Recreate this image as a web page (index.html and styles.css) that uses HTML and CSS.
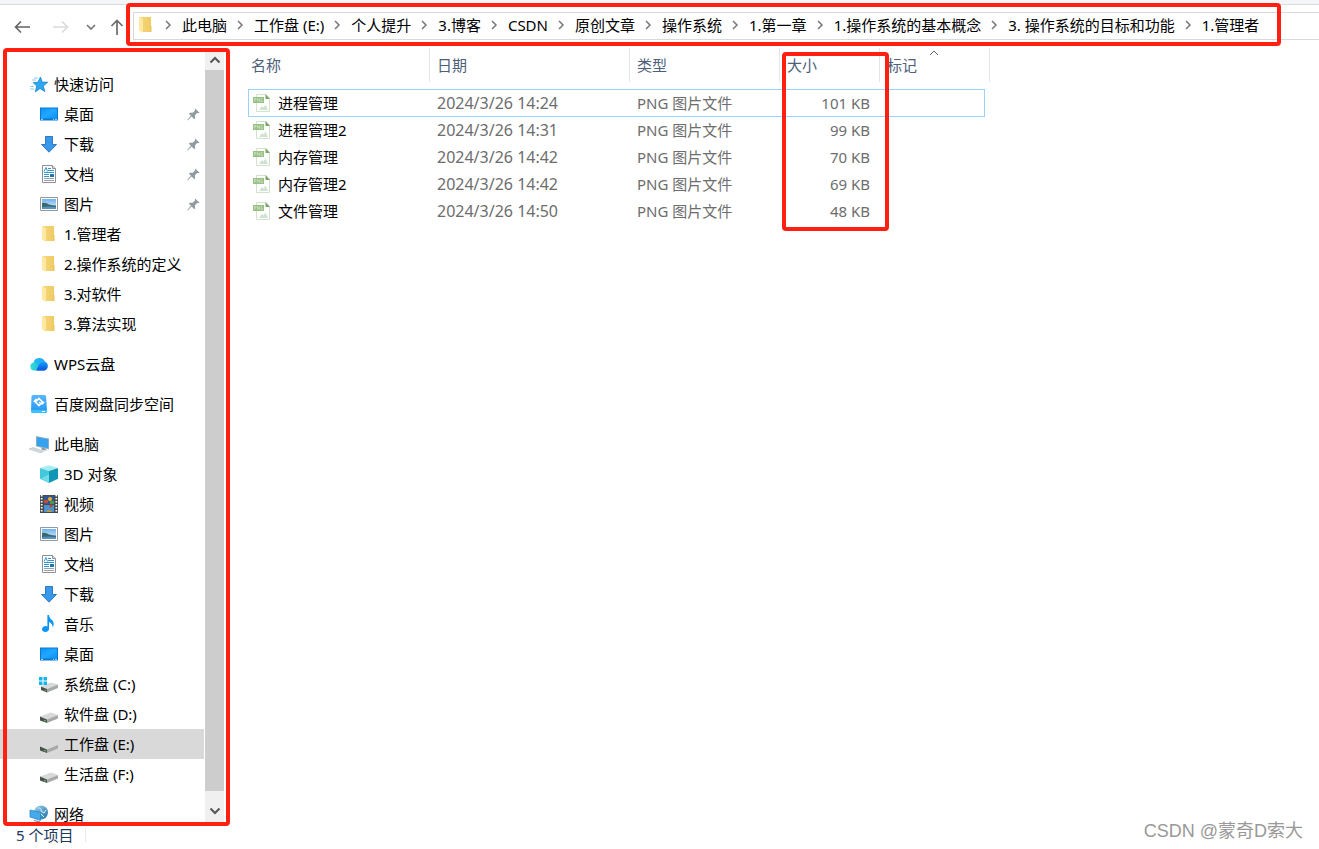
FILE: index.html
```html
<!DOCTYPE html>
<html lang="zh-CN">
<head>
<meta charset="utf-8">
<title>1.管理者</title>
<link rel="stylesheet" href="styles.css">
</head>
<body>
<svg class="sprite" aria-hidden="true">
  <defs>
    <linearGradient id="g-blue" x1="0" y1="0" x2="1" y2="1"><stop offset="0" stop-color="#0a95f5"/><stop offset=".5" stop-color="#22a7ff"/><stop offset="1" stop-color="#0a90f0"/></linearGradient>
    <linearGradient id="g-cloud" x1="0" y1="0" x2="1" y2="0"><stop offset="0" stop-color="#35e0d2"/><stop offset="1" stop-color="#17a4e8"/></linearGradient>
    <linearGradient id="g-cloud2" x1="0" y1="0" x2="0" y2="1"><stop offset="0" stop-color="#1aa4fb"/><stop offset="1" stop-color="#0a4fe0"/></linearGradient>
    <linearGradient id="g-folder" x1="0" y1="0" x2="1" y2="0"><stop offset="0" stop-color="#f5d77e"/><stop offset="1" stop-color="#f0cb63"/></linearGradient>
    <linearGradient id="g-sky" x1="0" y1="0" x2="0" y2="1"><stop offset="0" stop-color="#6fb2ee"/><stop offset="1" stop-color="#e4f3fc"/></linearGradient>
    <linearGradient id="g-sync" x1="0" y1="0" x2="0" y2="1"><stop offset="0" stop-color="#5ab6fb"/><stop offset="1" stop-color="#2196f8"/></linearGradient>
    <linearGradient id="g-globe" x1="0" y1="0" x2="1" y2="1"><stop offset="0" stop-color="#9fd4ee"/><stop offset="1" stop-color="#1e6ea8"/></linearGradient>
  </defs>
  <symbol id="i-star" viewBox="0 0 18 18"><path d="M10.500 2 12 7l5.700.3-4.500 3.600 1.700 5.600-4.900-3-4.600 3.300 1.300-5.700-3.400-3.500 4.600-.3z" fill="#2ba8f3" stroke="#1182cc" stroke-width=".8"/><path d="M4 3h4M2 5h4M.500 11.500h3M0 14h4" stroke="#54b6ee" stroke-width=".7"/></symbol>
  <symbol id="i-desktop" viewBox="0 0 18 18"><path d="M0 2.500h18v13H0z" fill="#0879cf"/><path d="M1 3.500h16v10H1z" fill="url(#g-blue)"/><path d="M1 14.300h2m10 0h1m1 0h2" stroke="#d5efff" stroke-width=".9"/></symbol>
  <symbol id="i-down" viewBox="0 0 18 18"><path d="M5.500 1.500h7v8h4L9 17.200 1.500 9.500h4z" fill="#3a98ea" stroke="#2372bd" stroke-width=".9"/></symbol>
  <symbol id="i-doc" viewBox="0 0 18 18"><path d="M2.500.5h10l3 3v14h-13z" fill="#fff" stroke="#8b9299"/><path d="M12.500.5v3h3" fill="#ddd" stroke="#8b9299"/><path d="m4 6.500 2-4 1.500 4M8 3.500h3M8 5.500h6M4 7.500h10M4 9.500h5M4 11.500h5" stroke="#3494cf" fill="none"/><path d="M10 9h4v3h-4z" fill="#2277ab"/><path d="M4 13.500h10M4 15.500h10" stroke="#999fa5"/></symbol>
  <symbol id="i-picture" viewBox="0 0 18 18"><path d="M.5 2.500h17v13H.5z" fill="#fff" stroke="#929a9f"/><path d="M2 4h14v10H2z" fill="url(#g-sky)"/><path d="M2 8q4-1 7 1.500 4 1 7 1v2H2z" fill="#386b6a"/><path d="M2 12q7-1 14 0v2H2z" fill="#5a91c3"/></symbol>
  <symbol id="i-folder" viewBox="0 0 18 18"><path d="M3 1h11v15H6z" fill="url(#g-folder)"/><path d="M13 10h1.500v6H13z" fill="#edc45b"/><path d="m2 1 4 2v14l-4-2.500z" fill="#ffe8a0"/></symbol>
  <symbol id="i-cloud" viewBox="0 0 18 18"><path d="M4 15.500a4 4 0 0 1-.5-7.900A6 6 0 0 1 15 7v8.500z" fill="url(#g-cloud)"/><path d="M4.500 5.500a5.500 5.500 0 0 1 9.300 1c-3 .3-4.500 2.500-5.300 4-1-2.500-2.300-3-4-3z" fill="#20b4f6"/><path d="M6 15.500c2-1 2-9 8-8.900a4.500 4.500 0 0 1 0 8.900z" fill="url(#g-cloud2)"/></symbol>
  <symbol id="i-sync" viewBox="0 0 18 18"><path d="M3 0h11.500q1.500 0 1.600 1.500L17 15v1q0 2-2 2H3q-2 0-2-2L1.500 1.500Q1.500 0 3 0z" fill="url(#g-sync)"/><path d="M1 15h16v1q0 2-2 2H3q-2 0-2-2z" fill="#38c3ff"/><path d="M9 3.500 12.500 7 9 10.500 5.500 7zM3.700 6.800 6.500 4M11.500 9.500 14.200 7M9 7l2 2" fill="none" stroke="#fff" stroke-width="1.600"/><path d="M12 16.500h3" stroke="#fff"/></symbol>
  <symbol id="i-pc" viewBox="0 0 18 18"><path d="m6 1 13 2.500v11L6 11.500z" fill="#a5b3be"/><path d="m6.700 2 11.600 2.300v9L6.700 10.700z" fill="#35a2ed"/><path d="M11 12.700h3.500l2.500 3-5-1z" fill="#8b9dac"/><path d="m-1 14 4-1.500 11 3.500-3 2z" fill="#d3d9dd" stroke="#aeb8bf" stroke-width=".5"/></symbol>
  <symbol id="i-cube" viewBox="0 0 18 18"><path d="m0 3 9-2.800L18 3 9 6z" fill="#a6edf3"/><path d="m0 3 9 3v12l-9-4.200z" fill="#43c8db"/><path d="m9 6 9-3v10.800L9 18z" fill="#1097b3"/><path d="m1 13.600 8-4.200V18z" fill="#70dce8"/></symbol>
  <symbol id="i-video" viewBox="0 0 18 18"><path d="M0 0h18v18H0z" fill="#444b4e"/><path d="M1.700 0v18M16.300 0v18" stroke="#fff" stroke-width="1.700" stroke-dasharray="1.500 1.500"/><path d="M4 1h10v8H4z" fill="#315793"/><path d="M4 10h10v7H4z" fill="#4b91d4"/><circle cx="10" cy="4" r="2" fill="#edaf27"/><path d="M4 5h4v3H4z" fill="#c64c35"/><path d="M10 6h4v3h-4z" fill="#49994a"/><circle cx="11" cy="11" r="1.500" fill="#c84231"/><path d="M6 17q3-4 6 0z" fill="#d49a26"/></symbol>
  <symbol id="i-music" viewBox="0 0 18 18"><path d="M9 0q0 3 3.500 5.500 2.500 3.500 0 7 .5-4-3.500-5.500v7a3.500 3 0 1 1-1.600-2.500V0z" fill="#0796f5"/></symbol>
  <symbol id="i-drive" viewBox="0 0 18 18"><path d="m0 11.500 11-4 7 2.500-11 4.500z" fill="#d7d9da"/><path d="m0 11.500 7 3V18l-7-2.500z" fill="#4b504f"/><path d="m7 14.500 11-4.500v3.500L7 18z" fill="#a6a9aa"/><path d="m4 15.300 2 .7" stroke="#58c45e" stroke-width="1.300"/></symbol>
  <symbol id="i-sysdrive" viewBox="0 0 18 18"><path d="m1 11 10-3.500 7 2-11 4.500z" fill="#d7d9da"/><path d="m1 11.500 6 2.500v3.500L1 15z" fill="#4b504f"/><path d="m7 14 11-4.500V13L7 17.500z" fill="#a6a9aa"/><path d="m4.500 15 1.500.5" stroke="#58c45e" stroke-width="1.300"/><path d="M-1 2h3.500v3.500H-1zM3.500 2H7v3.500H3.500zM-1 6.500h3.500V10H-1zM3.500 6.500H7V10H3.500z" fill="#12b4ed"/></symbol>
  <symbol id="i-network" viewBox="0 0 18 18"><circle cx="11" cy="7.500" r="7" fill="url(#g-globe)"/><path d="M8 3q4 0 3 3l3 2 2-3M9 7l5 5" stroke="#d6f0f6" fill="none"/><path d="m0 5 10.500 2.300V15.500L0 12z" fill="#46a9ea" stroke="#2683c6" stroke-width=".7"/><path d="m4 15.500 6 1.500" stroke="#69869a"/></symbol>
  <symbol id="i-pin" viewBox="0 0 14 14"><path d="m8.800.5 4.700 4.500-1.500.7-1.200-.3L8.500 8l.3 3-1 1L5 9.200.7 13.500.2 13 4.200 8.400 2 5.800l1-.8 3 .2 2.400-2.300z" fill="#919ba2"/></symbol>
  <symbol id="i-png" viewBox="0 0 18 18"><path d="M3.500.5h9.500l3.500 4v13h-13z" fill="#fff" stroke="#d2e2cc"/><path d="M12.500 0 17 5h-4.500z" fill="#77a767"/><path d="M0 3h11v6H0z" fill="#98c083"/><path d="M1.500 7.500v-3h1.500v1.500H1.500M4.500 7.500v-3l2 3v-3M9.500 4.500H8v3h1.500V6" fill="none" stroke="#d9ead1" stroke-width=".6"/><path d="m6 16 3-4 1.500 1.500 2-3L15 16z" fill="#cfe3d0"/></symbol>
  <symbol id="i-chev" viewBox="0 0 8 10"><path d="m2 1 4 4-4 4" fill="none" stroke="#777" stroke-width="1.500"/></symbol>
</svg>

<div class="window">
  <div class="ribbon-edge"></div>
  <header class="toolbar">
    <div class="history">
      <button class="tool" aria-label="后退"><svg width="16" height="14" viewBox="0 0 16 14"><path d="M16 7H1.500M7 1.500 1.500 7 7 12.500" fill="none" stroke="#636363" stroke-width="1.600"/></svg></button>
      <button class="tool" aria-label="前进" disabled><svg width="16" height="14" viewBox="0 0 16 14"><path d="M0 7h14.500M9 1.500 14.500 7 9 12.500" fill="none" stroke="#dadada" stroke-width="1.600"/></svg></button>
      <button class="tool recent" aria-label="最近的位置"><svg width="10" height="8" viewBox="0 0 10 8"><path d="m1 2 4 4 4-4" fill="none" stroke="#777" stroke-width="1.700"/></svg></button>
      <button class="tool up" aria-label="向上"><svg width="14" height="16" viewBox="0 0 14 16"><path d="M7 16V1.500M1.500 7 7 1.500 12.500 7" fill="none" stroke="#6b6b6b" stroke-width="1.700"/></svg></button>
    </div>
    <nav class="address" aria-label="地址">
      <svg class="icon"><use href="#i-folder"/></svg>
      <ol class="crumbs">
        <li><svg class="chev"><use href="#i-chev"/></svg><a href="#">此电脑</a></li>
        <li><svg class="chev"><use href="#i-chev"/></svg><a href="#">工作盘 (E:)</a></li>
        <li><svg class="chev"><use href="#i-chev"/></svg><a href="#">个人提升</a></li>
        <li><svg class="chev"><use href="#i-chev"/></svg><a href="#">3.博客</a></li>
        <li><svg class="chev"><use href="#i-chev"/></svg><a href="#">CSDN</a></li>
        <li><svg class="chev"><use href="#i-chev"/></svg><a href="#">原创文章</a></li>
        <li><svg class="chev"><use href="#i-chev"/></svg><a href="#">操作系统</a></li>
        <li><svg class="chev"><use href="#i-chev"/></svg><a href="#">1.第一章</a></li>
        <li><svg class="chev"><use href="#i-chev"/></svg><a href="#">1.操作系统的基本概念</a></li>
        <li><svg class="chev"><use href="#i-chev"/></svg><a href="#">3. 操作系统的目标和功能</a></li>
        <li><svg class="chev"><use href="#i-chev"/></svg><a href="#">1.管理者</a></li>
      </ol>
    </nav>
    <div class="mark mark-address"></div>
  </header>

  <div class="body">
    <aside class="sidebar">
      <nav class="tree" aria-label="导航窗格">
        <ul class="group">
          <li><a class="node root" href="#"><svg class="icon"><use href="#i-star"/></svg>快速访问</a></li>
          <li><a class="node" href="#"><svg class="icon"><use href="#i-desktop"/></svg>桌面<svg class="pin"><use href="#i-pin"/></svg></a></li>
          <li><a class="node" href="#"><svg class="icon"><use href="#i-down"/></svg>下载<svg class="pin"><use href="#i-pin"/></svg></a></li>
          <li><a class="node" href="#"><svg class="icon"><use href="#i-doc"/></svg>文档<svg class="pin"><use href="#i-pin"/></svg></a></li>
          <li><a class="node" href="#"><svg class="icon"><use href="#i-picture"/></svg>图片<svg class="pin"><use href="#i-pin"/></svg></a></li>
          <li><a class="node" href="#"><svg class="icon"><use href="#i-folder"/></svg>1.管理者</a></li>
          <li><a class="node" href="#"><svg class="icon"><use href="#i-folder"/></svg>2.操作系统的定义</a></li>
          <li><a class="node" href="#"><svg class="icon"><use href="#i-folder"/></svg>3.对软件</a></li>
          <li><a class="node" href="#"><svg class="icon"><use href="#i-folder"/></svg>3.算法实现</a></li>
        </ul>
        <ul class="group">
          <li><a class="node root" href="#"><svg class="icon"><use href="#i-cloud"/></svg>WPS云盘</a></li>
        </ul>
        <ul class="group">
          <li><a class="node root" href="#"><svg class="icon"><use href="#i-sync"/></svg>百度网盘同步空间</a></li>
        </ul>
        <ul class="group">
          <li><a class="node root" href="#"><svg class="icon"><use href="#i-pc"/></svg>此电脑</a></li>
          <li><a class="node" href="#"><svg class="icon"><use href="#i-cube"/></svg>3D 对象</a></li>
          <li><a class="node" href="#"><svg class="icon"><use href="#i-video"/></svg>视频</a></li>
          <li><a class="node" href="#"><svg class="icon"><use href="#i-picture"/></svg>图片</a></li>
          <li><a class="node" href="#"><svg class="icon"><use href="#i-doc"/></svg>文档</a></li>
          <li><a class="node" href="#"><svg class="icon"><use href="#i-down"/></svg>下载</a></li>
          <li><a class="node" href="#"><svg class="icon"><use href="#i-music"/></svg>音乐</a></li>
          <li><a class="node" href="#"><svg class="icon"><use href="#i-desktop"/></svg>桌面</a></li>
          <li><a class="node" href="#"><svg class="icon"><use href="#i-sysdrive"/></svg>系统盘 (C:)</a></li>
          <li><a class="node" href="#"><svg class="icon"><use href="#i-drive"/></svg>软件盘 (D:)</a></li>
          <li><a class="node selected" href="#"><svg class="icon"><use href="#i-drive"/></svg>工作盘 (E:)</a></li>
          <li><a class="node" href="#"><svg class="icon"><use href="#i-drive"/></svg>生活盘 (F:)</a></li>
        </ul>
        <ul class="group">
          <li><a class="node root" href="#"><svg class="icon"><use href="#i-network"/></svg>网络</a></li>
        </ul>
      </nav>
      <div class="scrollbar">
        <button class="scroll-btn" aria-label="向上滚动"><svg width="12" height="8" viewBox="0 0 12 8"><path d="m1.500 6.500 4.500-4.500 4.500 4.500" fill="none" stroke="#555" stroke-width="2"/></svg></button>
        <div class="thumb"></div>
        <button class="scroll-btn end" aria-label="向下滚动"><svg width="12" height="8" viewBox="0 0 12 8"><path d="m1.500 1.500 4.500 4.500 4.500-4.500" fill="none" stroke="#555" stroke-width="2"/></svg></button>
      </div>
      <div class="mark mark-sidebar"></div>
    </aside>

    <main class="files">
      <table class="list">
        <colgroup><col class="c-name"><col class="c-date"><col class="c-type"><col class="c-size"><col class="c-tag"><col class="c-tail"></colgroup>
        <thead>
          <tr><th>名称</th><th>日期</th><th>类型</th><th>大小</th><th colspan="2">标记<svg class="sort" viewBox="0 0 10 6"><path d="m1 5 4-4 4 4" fill="none" stroke="#666"/></svg></th></tr>
        </thead>
        <tbody>
          <tr class="gap"><td colspan="6"></td></tr>
          <tr class="focused"><td><span class="file"><svg class="icon"><use href="#i-png"/></svg>进程管理</span></td><td class="date">2024/3/26 14:24</td><td>PNG 图片文件</td><td class="num">101 KB</td><td></td></tr>
          <tr><td><span class="file"><svg class="icon"><use href="#i-png"/></svg>进程管理2</span></td><td class="date">2024/3/26 14:31</td><td>PNG 图片文件</td><td class="num">99 KB</td><td></td></tr>
          <tr><td><span class="file"><svg class="icon"><use href="#i-png"/></svg>内存管理</span></td><td class="date">2024/3/26 14:42</td><td>PNG 图片文件</td><td class="num">70 KB</td><td></td></tr>
          <tr><td><span class="file"><svg class="icon"><use href="#i-png"/></svg>内存管理2</span></td><td class="date">2024/3/26 14:42</td><td>PNG 图片文件</td><td class="num">69 KB</td><td></td></tr>
          <tr><td><span class="file"><svg class="icon"><use href="#i-png"/></svg>文件管理</span></td><td class="date">2024/3/26 14:50</td><td>PNG 图片文件</td><td class="num">48 KB</td><td></td></tr>
        </tbody>
      </table>
      <div class="mark mark-size"></div>
    </main>
  </div>

  <footer class="status"><span class="count">5 个项目</span></footer>
  <div class="watermark">CSDN @蒙奇D索大</div>
</div>
</body>
</html>
```
FILE: styles.css
```css
* { box-sizing: border-box; }
body {
  margin: 0;
  background: #fff;
  color: #000;
  font: 15px/20px "Noto Sans", "Noto Sans CJK SC", sans-serif;
}
ul, ol { list-style: none; margin: 0; padding: 0; }
a { color: inherit; text-decoration: none; }
button { border: 0; padding: 0; background: none; display: flex; align-items: center; justify-content: center; }
svg { display: block; flex: none; }
.sprite { position: absolute; width: 0; height: 0; }
.icon { width: 18px; height: 18px; overflow: visible; }
.icon use { overflow: visible; }
symbol { overflow: visible; }

.window { position: relative; display: flex; flex-direction: column; height: 100vh; overflow: hidden; }
.ribbon-edge { flex: none; height: 5px; background: #f4f5f8; border-bottom: 1px solid #dadbdc; }

.toolbar { position: relative; flex: none; display: flex; height: 43px; padding-top: 7px; }
.history { display: flex; align-items: center; width: 133px; height: 30px; padding-left: 14px; }
.tool { width: 16px; height: 16px; margin-right: 23px; }
.tool.recent { width: 10px; margin: 0 14px 0 -6px; }
.tool.up { width: 14px; margin: 0; }
.address {
  flex: 1;
  display: flex;
  align-items: center;
  height: 28px;
  padding: 0 0 2px 3px;
  border: 1px solid #d9d9d9;
  border-right: 0;
  white-space: nowrap;
}
.crumbs { display: flex; padding-left: 1px; }
.crumbs li { display: flex; align-items: center; }
.chev { width: 8px; height: 10px; margin: 0 10px 0 9px; }
.crumbs li:first-child .chev { margin-left: 8px; }

.mark { position: absolute; border: 4px solid #ff2012; border-radius: 4px; pointer-events: none; z-index: 2; }
.mark-address { left: 126px; right: 38px; top: -2px; height: 43px; }
.mark-sidebar { left: 3px; top: 0; right: 0; bottom: 0; }
.mark-size { left: 552px; top: 4px; width: 107px; height: 179px; }

.body { flex: 1; display: flex; min-height: 0; }
.sidebar { position: relative; flex: none; display: flex; width: 230px; overflow: hidden; }
.tree { width: 204px; padding-top: 21px; }
.group { margin-bottom: 10px; }
.node { display: flex; align-items: center; gap: 6px; height: 30px; padding: 0 4px 0 40px; white-space: nowrap; }
.root { padding-left: 30px; }
.selected { background: #d9d9d9; }
.pin { width: 13px; height: 13px; margin-left: auto; }
.scrollbar { display: flex; flex-direction: column; width: 19px; margin: 4px 0 4px 1px; background: #f0f0f0; }
.scroll-btn { flex: none; height: 18px; padding-bottom: 2px; }
.scroll-btn.end { height: 31px; padding: 8px 0 0; }
.thumb { flex: 1; background: #cdcdcd; }

.files { position: relative; flex: 1; padding-left: 18px; }
.list { table-layout: fixed; width: 742px; border-collapse: separate; border-spacing: 0; }
.c-name { width: 182px; }
.c-date { width: 200px; }
.c-type { width: 150px; }
.c-size { width: 100px; }
.c-tag { width: 105px; }
.c-tail { width: 5px; }
.list th {
  position: relative;
  height: 34px;
  padding: 0 0 0 7px;
  border-right: 1px solid #e5e5e5;
  color: #4c607a;
  font-weight: 400;
  text-align: left;
}
.list th:first-child { padding-left: 3px; }
.sort { position: absolute; left: 49px; top: 2px; width: 10px; height: 6px; }
.list td { height: 27px; padding: 0 0 2px 7px; color: #6d6d6d; white-space: nowrap; }
.list td:first-child { padding-left: 5px; color: #000; }
.list .gap td { height: 7px; }
.list .date { font-size: 16px; }
.list .num { padding: 0 10px 2px 0; text-align: right; }
.list .focused td { height: 28px; padding-bottom: 0; border: solid #99d1ff; border-width: 1px 0; }
.list .focused td:first-child { border-left-width: 1px; padding-left: 4px; }
.list .focused td:last-child { border-right-width: 1px; }
.file { display: flex; align-items: center; gap: 7px; }

.status { flex: none; display: flex; align-items: flex-start; height: 23px; padding: 2px 0 0 16px; color: #1e395b; }
.count { height: 14px; padding-right: 12px; border-right: 1px solid #e9e9e9; line-height: 14px; }
.watermark {
  position: absolute;
  right: 16px;
  bottom: 8px;
  color: #999;
  font: 18px/20px "Liberation Sans", "Noto Sans CJK SC", sans-serif;
}
```
